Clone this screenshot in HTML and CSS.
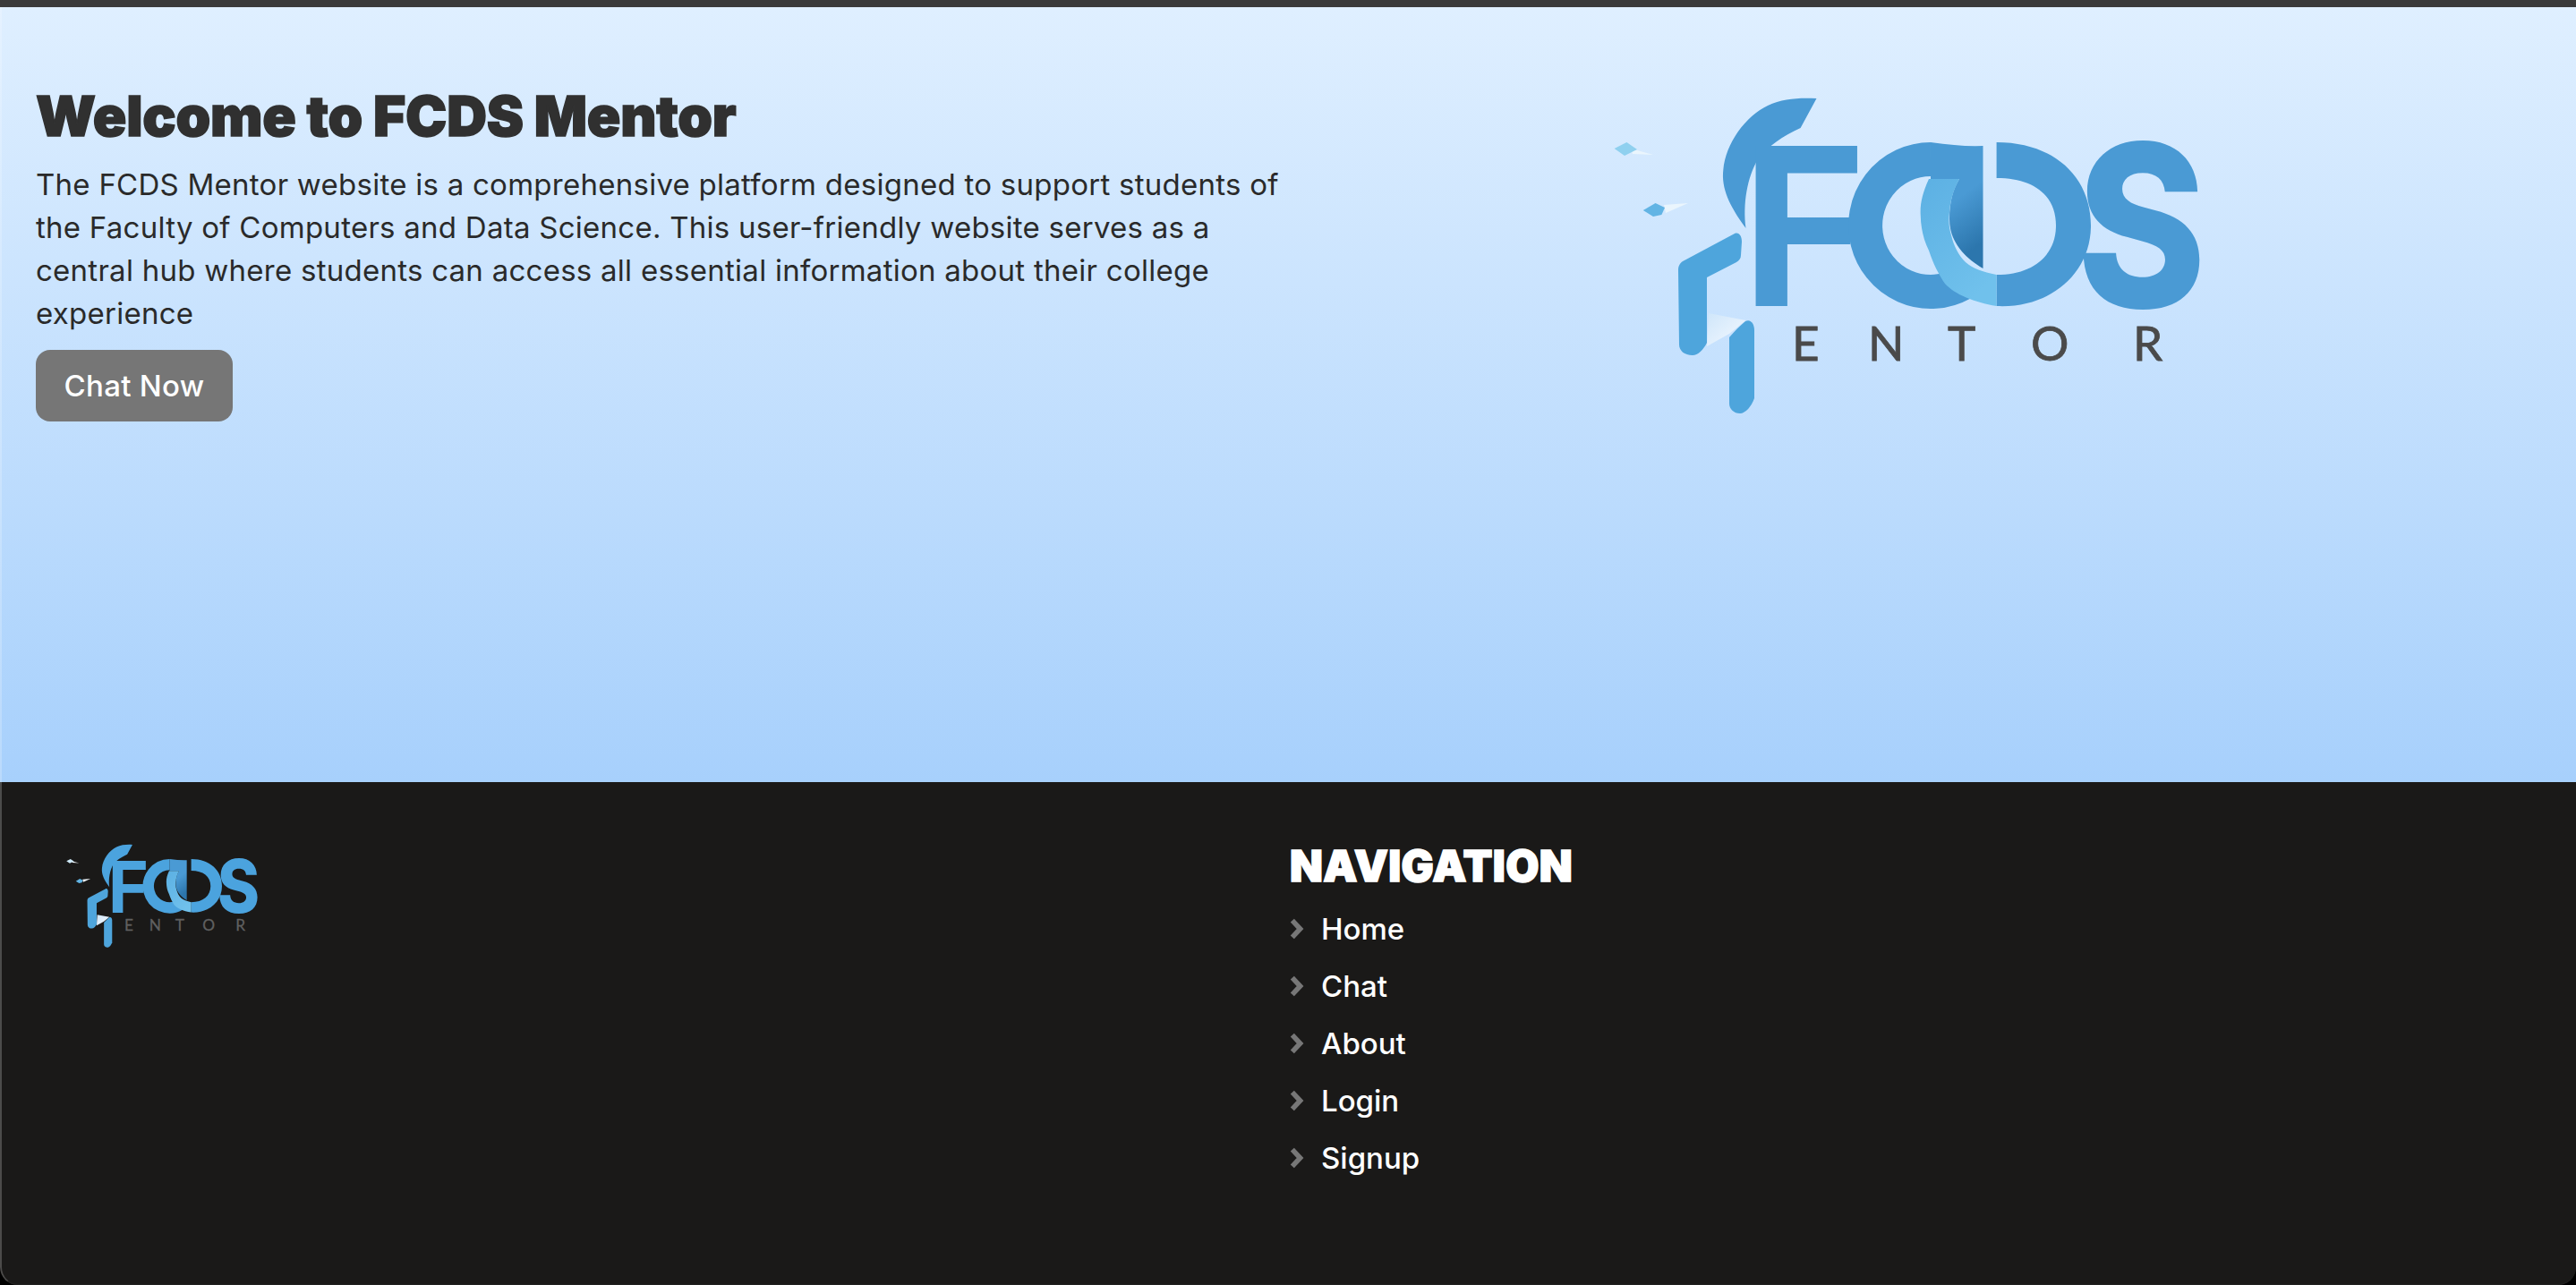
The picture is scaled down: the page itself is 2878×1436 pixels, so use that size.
FILE: index.html
```html
<!DOCTYPE html>
<html lang="en">
<head>
<meta charset="utf-8">
<title>FCDS Mentor</title>
<link rel="stylesheet" href="styles.css">
</head>
<body>
<div class="window">
<div class="topbar"></div>
<section class="hero">
  <div class="intro">
    <h1>Welcome to FCDS Mentor</h1>
    <p>The FCDS Mentor website is a comprehensive platform designed to support students of<br>the Faculty of Computers and Data Science. This user-friendly website serves as a<br>central hub where students can access all essential information about their college<br>experience</p>
    <a class="cta" href="#">Chat Now</a>
  </div>
  <div class="hero-logo">
    <svg class="logo-large" viewBox="0 0 720 410" role="img" aria-label="FCDS Mentor logo">
      <defs>
        <linearGradient id="lightBand" x1="0" y1="0" x2="0.6" y2="1">
          <stop offset="0" stop-color="#5cb0e3"/>
          <stop offset="1" stop-color="#70c1ec"/>
        </linearGradient>
        <linearGradient id="shade" x1="0" y1="0" x2="0.3" y2="1">
          <stop offset="0.55" stop-color="var(--ring)"/>
          <stop offset="1" stop-color="#2c76ad"/>
        </linearGradient>
        <linearGradient id="fold" x1="0" y1="0" x2="1" y2="1">
          <stop offset="0" stop-color="#cfe6fa"/>
          <stop offset="1" stop-color="#f4f9ff"/>
        </linearGradient>
      </defs>
      <g id="logo">
        <polygon class="tail" points="62,86 87,93 64,92"/>
        <polygon class="dot-light" points="43.6,86 57.4,79 69,87 55,94"/>
        <polygon class="tail" points="99,149 126,147 101,158"/>
        <polygon class="dot-mid" points="75.8,155 89.5,147 100,152 96.4,160 87,162"/>
        <path class="ring" d="M269.5 30 L251.6 63 C232 72 214 84 204 98 C192 118 187 148 190.5 175 C172 150 163 130 165.3 110 C168 80 190 50 215 38 C232 30 250 29 269.5 30 Z"/>
        <text class="letter" x="186" y="262" textLength="139" lengthAdjust="spacingAndGlyphs">F</text>
        <path class="ring-stroke" d="M397 98 A73 74 0 1 0 432 237"/>
        <path class="shade" d="M397 79 Q430 84 455.5 83 L455.5 220 C435 208 418 190 418 165 C418 145 422 132 429 120 L397 120 Z"/>
        <path class="ring" d="M470.6 79 C535 79 576 118 576 172 C576 226 530 265 470.6 262 L470.6 227 C512 227 537 205 537 172 C537 138 512 119 470.6 119 Z"/>
        <path class="band" d="M395 120 C388 135 385 148 385.7 160 C386 175 389 188 395 200 C400 215 406 227 413 237 C424 249 446 258 470.6 262 L470.6 227 C455 224 444 220 436 213 C428 205 423 195 420 183 C417 173 417 165 418 157 C419 143 423 131 429 120 Z"/>
        <text class="letter letter-s" x="560" y="264" textLength="145" lengthAdjust="spacingAndGlyphs">S</text>
        <path class="arm" d="M178 181 C183 179 186 184 186 190 L185 205 C185 209 183 211 180 213 L147 230 L147 303 C143 311 137 317 131 317 C122 317 116 312 116 305 L115 222 C115 217 117 214 120 212 Z"/>
        <polygon class="foldpart" points="149,270 190.5,278 172,293 147,307"/>
        <path class="arm" d="M190 279 C196 276 200 282 200 289 L200 365 C197 374 190 382 184 382 C177 382 172 377 172 371 L172 297 C178 290 184 284 190 279 Z"/>
        <text class="wordmark" x="242 327 416 509 623" y="323">ENTOR</text>
      </g>
    </svg>
  </div>
</section>
<footer class="footer">
  <div class="footer-brand">
    <svg class="logo-small" viewBox="0 0 720 410" role="img" aria-label="FCDS Mentor logo"><use href="#logo"/></svg>
  </div>
  <nav class="footer-nav">
    <h2>NAVIGATION</h2>
    <ul>
      <li><svg class="chev" viewBox="0 0 16 24"><path d="M2.8 2.6 L11.6 12 L2.8 21.4"/></svg><a href="#">Home</a></li>
      <li><svg class="chev" viewBox="0 0 16 24"><path d="M2.8 2.6 L11.6 12 L2.8 21.4"/></svg><a href="#">Chat</a></li>
      <li><svg class="chev" viewBox="0 0 16 24"><path d="M2.8 2.6 L11.6 12 L2.8 21.4"/></svg><a href="#">About</a></li>
      <li><svg class="chev" viewBox="0 0 16 24"><path d="M2.8 2.6 L11.6 12 L2.8 21.4"/></svg><a href="#">Login</a></li>
      <li><svg class="chev" viewBox="0 0 16 24"><path d="M2.8 2.6 L11.6 12 L2.8 21.4"/></svg><a href="#">Signup</a></li>
    </ul>
  </nav>
</footer>
</div>
</body>
</html>
```
FILE: styles.css
```css
* { box-sizing: border-box; }
html, body { margin: 0; padding: 0; }
body {
  font-family: "Inter", "Liberation Sans", sans-serif;
  background: #000;
  height: 1436px;
  overflow: hidden;
}
.window {
  position: relative;
  height: 1436px;
  display: flex;
  flex-direction: column;
  background: #1a1918;
  border-radius: 0 0 20px 20px;
  overflow: hidden;
}
.window::after {
  content: "";
  position: absolute;
  inset: 8px 0 0;
  border-left: 2px solid rgba(255, 255, 255, 0.22);
  border-bottom: 1px solid rgba(255, 255, 255, 0.04);
  border-radius: 0 0 20px 20px;
  pointer-events: none;
}
.topbar { height: 8px; background: #3a3a3a; flex: none; }
.hero {
  height: 866px;
  flex: none;
  display: flex;
  background: linear-gradient(180deg, #dfefff 0%, #a7d0fc 100%);
  --ring: #4a9ad4;
  --dot: #8fd0ef;
  --dot2: #62b4e4;
  --tail: #eaf5fd;
  --word: #4a4a4a;
}
.intro { width: 1440px; flex: none; padding: 84px 0 0 40px; }
.intro h1 {
  margin: 0;
  font-size: 62px;
  line-height: 76px;
  font-weight: 900;
  color: #303030;
  -webkit-text-stroke: 1.5px #303030;
  letter-spacing: -0.25px;
  white-space: nowrap;
}
.intro p {
  margin: 14px 0 0;
  font-size: 33px;
  line-height: 48px;
  font-weight: 400;
  color: #2a2a2a;
  letter-spacing: 0.26px;
  white-space: nowrap;
}
.cta {
  display: flex;
  align-items: center;
  justify-content: center;
  width: 220px;
  height: 80px;
  margin-top: 17px;
  border-radius: 16px;
  background: #767676;
  color: #fff;
  font-size: 33px;
  font-weight: 500;
  letter-spacing: 0.3px;
  text-decoration: none;
}
.hero-logo { flex: 1; padding: 72px 0 0 320px; }
.logo-large { display: block; width: 720px; height: 410px; }
.logo-small { display: block; width: 235px; height: 134px; }
.ring { fill: var(--ring); }
.shade { fill: url(#shade); }
.band { fill: url(#lightBand); }
.arm { fill: #4ea5dc; }
.foldpart { fill: url(#fold); }
.dot-light { fill: var(--dot); }
.dot-mid { fill: var(--dot2); }
.tail { fill: var(--tail); }
.ring-stroke { fill: none; stroke: var(--ring); stroke-width: 38; }
.letter { font-family: "Inter", sans-serif; font-weight: 700; font-size: 246px; fill: var(--ring); }
.letter-s { font-size: 253px; font-weight: 800; }
.wordmark { font-family: "Lato", sans-serif; font-size: 53px; font-weight: 400; fill: var(--word); stroke: var(--word); stroke-width: 0.8; }
.footer {
  flex: 1;
  display: flex;
  background: #1a1918;
  --ring: #4ba3de;
  --dot: #cfeaf8;
  --dot2: #62b4e4;
  --tail: #f2f8fc;
  --word: #606060;
}
.footer-brand { width: 1441px; flex: none; padding: 60px 0 0 60px; }
.footer-nav { padding-top: 65px; }
.footer-nav h2 {
  margin: 0;
  font-size: 48px;
  line-height: 58px;
  font-weight: 900;
  color: #fff;
  -webkit-text-stroke: 1.5px #fff;
  letter-spacing: 0.4px;
}
.footer-nav ul { list-style: none; margin: 9px 0 0; padding: 0; display: flex; flex-direction: column; }
.footer-nav li { height: 64px; display: flex; align-items: center; gap: 19px; }
.footer-nav a { color: #fff; font-size: 33px; font-weight: 500; text-decoration: none; }
.chev { width: 16px; height: 24px; flex: none; overflow: visible; }
.chev path { fill: none; stroke: #777; stroke-width: 5.6; }
```
